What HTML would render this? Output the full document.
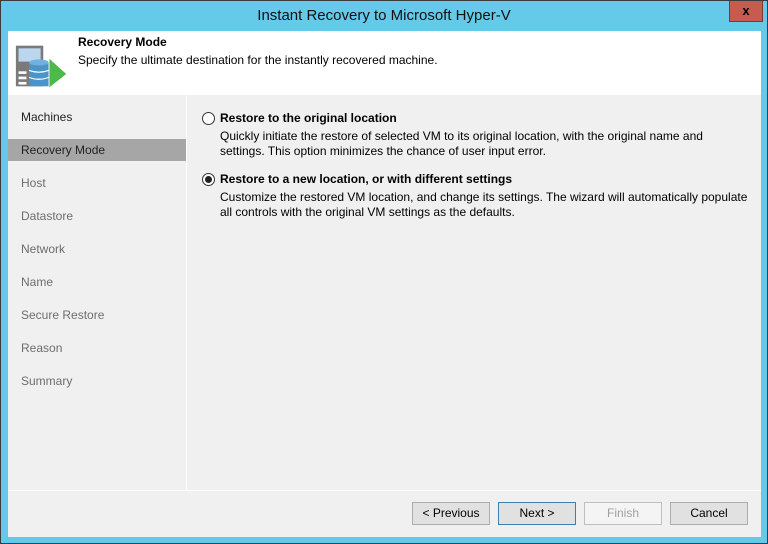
<!DOCTYPE html>
<html><head><style>
*{margin:0;padding:0;box-sizing:border-box}
body{width:768px;height:544px;background:#65c9e9;font-family:"Liberation Sans",sans-serif;font-size:12px;color:#000;position:relative;overflow:hidden;border:1px solid #3a3a3a}
.abs{position:absolute}
.title{left:0;width:766px;top:6px;text-align:center;font-size:15px;color:#111}
.close{left:728px;top:0;width:34px;height:21px;background:#c75b50;border:1px solid #7a3a34;border-top:none;text-align:center;font-weight:bold;font-size:13px;line-height:19px}
.win{left:7px;top:30px;width:753px;height:506px;background:#f0f0f0}
.hdr{left:0;top:0;width:753px;height:64px;background:#fff}
.nav{left:0;top:64px;width:179px;height:395px;background:#f0f0f0;border-right:1px solid #fff;padding-top:11px}
.nav div{height:22px;line-height:22px;margin-bottom:11px;padding-left:13px;color:#222}
.nav .sel{background:#a6a6a6}
.nav .dis{color:#6d6d6d}
.main{left:180px;top:64px;width:573px;height:395px;background:#f0f0f0}
.foot{left:0;top:459px;width:753px;border-top:1px solid #fff}
.btn{top:471px;width:78px;height:23px;border:1px solid #adadad;background:#e1e1e1;text-align:center;line-height:21px}
.radio{width:13px;height:13px;border:1px solid #333;border-radius:50%;background:#fff}
</style></head><body>
<div class="abs title">Instant Recovery to Microsoft Hyper-V</div>
<div class="abs close">x</div>
<div class="abs win">
 <div class="abs hdr">
  <svg class="abs" style="left:7px;top:11px" width="53" height="48" viewBox="0 0 60 48">
   <rect x="1" y="1" width="31" height="46" fill="#7a7a7a"/>
   <rect x="4" y="4" width="25" height="15" fill="#bcd6ee"/>
   <rect x="4" y="30" width="9" height="3" fill="#fff"/><rect x="4" y="36" width="9" height="3" fill="#fff"/><rect x="4" y="42" width="9" height="3" fill="#fff"/>
   <rect x="16" y="20" width="22" height="27" fill="#4a94c8"/>
   <ellipse cx="27" cy="20" rx="11" ry="3.5" fill="#6fb1df"/>
   <path d="M16 29 Q27 33 38 29 M16 37 Q27 41 38 37" stroke="#fff" stroke-width="1.3" fill="none"/>
   <path d="M39 16 L58 33 L39 48 Z" fill="#4cba48"/>
  </svg>
  <div class="abs" style="left:70px;top:4px;font-weight:bold">Recovery Mode</div>
  <div class="abs" style="left:70px;top:22px">Specify the ultimate destination for the instantly recovered machine.</div>
 </div>
 <div class="abs nav">
  <div>Machines</div><div class="sel">Recovery Mode</div><div class="dis">Host</div><div class="dis">Datastore</div><div class="dis">Network</div><div class="dis">Name</div><div class="dis">Secure Restore</div><div class="dis">Reason</div><div class="dis">Summary</div>
 </div>
 <div class="abs main">
  <div class="abs radio" style="left:14px;top:17px"></div>
  <div class="abs" style="left:32px;top:16px;font-weight:bold">Restore to the original location</div>
  <div class="abs" style="left:32px;top:34px;line-height:15px;width:530px">Quickly initiate the restore of selected VM to its original location, with the original name and settings. This option minimizes the chance of user input error.</div>
  <div class="abs radio" style="left:14px;top:78px"><div style="margin:2px;width:7px;height:7px;border-radius:50%;background:#222"></div></div>
  <div class="abs" style="left:32px;top:77px;font-weight:bold">Restore to a new location, or with different settings</div>
  <div class="abs" style="left:32px;top:95px;line-height:15px;width:540px">Customize the restored VM location, and change its settings. The wizard will automatically populate all controls with the original VM settings as the defaults.</div>
 </div>
 <div class="abs foot"></div>
 <div class="abs btn" style="left:404px">&lt; Previous</div>
 <div class="abs btn" style="left:490px;border-color:#3c7fb1">Next &gt;</div>
 <div class="abs btn" style="left:576px;background:#f4f4f4;border-color:#bfbfbf;color:#a0a0a0">Finish</div>
 <div class="abs btn" style="left:662px">Cancel</div>
</div>
</body></html>
